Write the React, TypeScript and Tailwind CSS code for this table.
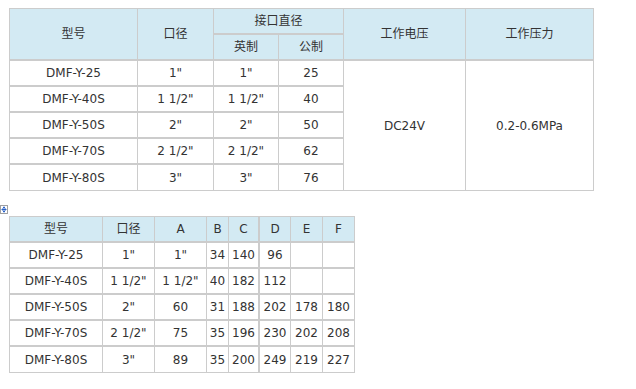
const font = { fontFamily: '"DejaVu Sans", "Noto Sans CJK SC", sans-serif' }

const rows1 = [
  ['DMF-Y-25', '1"', '1"', '25'],
  ['DMF-Y-40S', '1 1/2"', '1 1/2"', '40'],
  ['DMF-Y-50S', '2"', '2"', '50'],
  ['DMF-Y-70S', '2 1/2"', '2 1/2"', '62'],
  ['DMF-Y-80S', '3"', '3"', '76'],
]

const rows2 = [
  ['DMF-Y-25', '1"', '1"', '34', '140', '96', '', ''],
  ['DMF-Y-40S', '1 1/2"', '1 1/2"', '40', '182', '112', '', ''],
  ['DMF-Y-50S', '2"', '60', '31', '188', '202', '178', '180'],
  ['DMF-Y-70S', '2 1/2"', '75', '35', '196', '230', '202', '208'],
  ['DMF-Y-80S', '3"', '89', '35', '200', '249', '219', '227'],
]

const th = 'bg-[#d3eaf3] border-r border-b-2 border-[#cccccc] text-center font-normal h-[26px] p-0'
const td = 'border-r border-[#cccccc] text-center h-[26px] p-0'

function MoveHandle() {
  return (
    <svg width="8" height="9" viewBox="0 0 8 9" className="block">
      <rect x="0.5" y="0.5" width="7" height="8" fill="#fff" stroke="#a0a0a0" />
      <path d="M4 1.5v6M1.5 4.5h5" stroke="#2a62c8" strokeWidth="1" />
      <path d="M3 2.5h2M3 6.5h2M2.5 3.5v2M5.5 3.5v2" stroke="#2a62c8" strokeWidth="1" />
    </svg>
  )
}

export default function App() {
  return (
    <div className="w-[636px] h-[389px] bg-white text-[12px] text-[#333]" style={font}>
      <div className="pt-[8px] pl-[9px]">
        <table className="border-separate border-spacing-0 border-l border-t border-[#cccccc] leading-[14px]">
          <colgroup>
            <col className="w-[128px]" />
            <col className="w-[76px]" />
            <col className="w-[65px]" />
            <col className="w-[65px]" />
            <col className="w-[122px]" />
            <col className="w-[128px]" />
          </colgroup>
          <thead>
            <tr>
              <th rowSpan={2} className={th}>型号</th>
              <th rowSpan={2} className={th}>口径</th>
              <th colSpan={2} className={th}>接口直径</th>
              <th rowSpan={2} className={th}>工作电压</th>
              <th rowSpan={2} className={th}>工作压力</th>
            </tr>
            <tr>
              <th className={th}>英制</th>
              <th className={th}>公制</th>
            </tr>
          </thead>
          <tbody>
            {rows1.map((r, i) => (
              <tr key={r[0]}>
                {r.map((c, j) => (
                  <td key={j} className={`${td} ${i === 4 ? 'border-b' : 'border-b-2'}`}>{c}</td>
                ))}
                {i === 0 && (
                  <>
                    <td rowSpan={5} className={`${td} border-b`}>DC24V</td>
                    <td rowSpan={5} className={`${td} border-b`}>0.2-0.6MPa</td>
                  </>
                )}
              </tr>
            ))}
          </tbody>
        </table>
      </div>

      <div className="mt-[14px]">
        <MoveHandle />
      </div>

      <div className="pl-[9px] mt-[2px]">
        <table className="border-separate border-spacing-0 border-l border-t border-[#cccccc] leading-[14px]">
          <colgroup>
            <col className="w-[93px]" />
            <col className="w-[52px]" />
            <col className="w-[52px]" />
            <col className="w-[22px]" />
            <col className="w-[31px]" />
            <col className="w-[31px]" />
            <col className="w-[32px]" />
            <col className="w-[32px]" />
          </colgroup>
          <thead>
            <tr>
              {['型号', '口径', 'A', 'B', 'C', 'D', 'E', 'F'].map((h) => (
                <th key={h} className={`${th} ${h === 'C' ? 'border-r-2' : ''}`}>{h}</th>
              ))}
            </tr>
          </thead>
          <tbody>
            {rows2.map((r, i) => (
              <tr key={r[0]}>
                {r.map((c, j) => (
                  <td key={j} className={`${td} ${i === 4 ? 'border-b' : 'border-b-2'} ${j === 4 ? 'border-r-2' : ''}`}>{c}</td>
                ))}
              </tr>
            ))}
          </tbody>
        </table>
      </div>
    </div>
  )
}
